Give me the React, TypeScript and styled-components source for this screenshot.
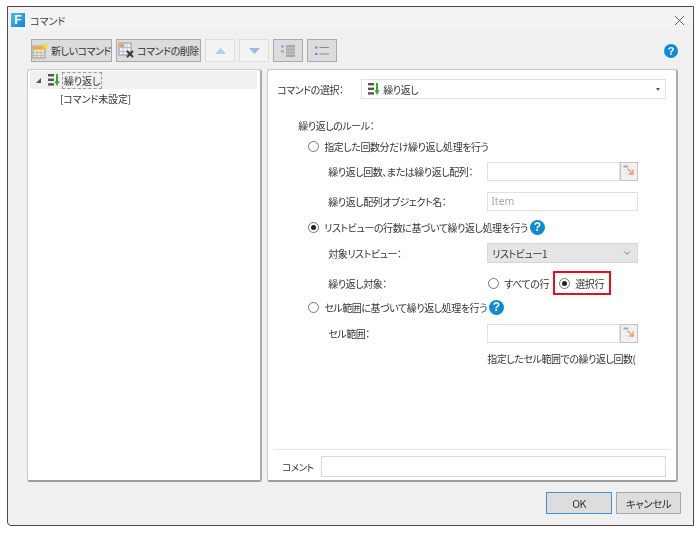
import styled, { createGlobalStyle } from 'styled-components';
import { ChevronDown, X } from 'lucide-react';

const GlobalStyle = createGlobalStyle`
  html, body {
    margin: 0;
    padding: 0;
    background: #fff;
  }
  body {
    font-family: "Noto Sans CJK JP", "Noto Sans", sans-serif;
    font-feature-settings: "palt";
    font-size: 10px;
    letter-spacing: -0.45px;
    color: #333;
  }
  * { box-sizing: border-box; }
`;

const RepeatIcon = () => (
  <svg width="14" height="14" viewBox="0 0 14 14">
    <rect x="1" y="1" width="6" height="2.4" fill="#555" />
    <rect x="1" y="5.6" width="6" height="2.4" fill="#555" />
    <rect x="1" y="10.2" width="6" height="2.4" fill="#555" />
    <path d="M10 1v8" stroke="#2fae2f" strokeWidth="2" />
    <path d="M7.4 8.200h5.200L10 13z" fill="#2fae2f" />
  </svg>
);

const NewIcon = () => (
  <svg width="17" height="17" viewBox="0 0 17 17">
    <rect x="1" y="4" width="12" height="12" fill="#f6e3bd" stroke="#9a9a9a" />
    <rect x="1.500" y="4.500" width="11" height="3" fill="#f0a83c" />
    <path d="M1 10.500h12M1 13.500h12M5 8v8M9 8v8" stroke="#a9b6c6" strokeWidth="0.8" />
    <path d="M13 0l1 2.500 2.500.5-2 1.500.5 2.500-2-1.300-2 1.300.5-2.500-2-1.500 2.500-.5z" fill="#f7d23c" />
  </svg>
);

const DeleteIcon = () => (
  <svg width="17" height="17" viewBox="0 0 17 17">
    <rect x="1" y="1" width="12" height="12" fill="#eef1f5" stroke="#8f9aa8" />
    <rect x="1.500" y="1.500" width="5" height="4" fill="#f2a33a" />
    <path d="M1 5.500h12M1 9.500h12M5 1v12M9 1v12" stroke="#a9b6c6" strokeWidth="0.8" />
    <path d="M9 9l6 6M15 9l-6 6" stroke="#333" strokeWidth="1.800" />
  </svg>
);

const RangeIcon = () => (
  <svg width="13" height="13" viewBox="0 0 13 13">
    <rect x="0.500" y="0.500" width="12" height="12" fill="#f5f1ec" />
    <rect x="0.500" y="0.500" width="5" height="2" fill="#8aa8d6" />
    <path d="M0.500 5h12M0.500 9h12M5 0.500v12M9 0.500v12" stroke="#e0e0e0" strokeWidth="0.6" />
    <path d="M4.500 3.500l5 5M10 4.500v4.500H6" stroke="#ee9a80" strokeWidth="1.300" fill="none" />
  </svg>
);

const TriangleIcon = ({ down }: { down?: boolean }) => (
  <svg width="11" height="6" viewBox="0 0 11 6">
    <path d={down ? 'M0 0h11L5.500 6z' : 'M5.500 0L11 6H0z'} fill={down ? '#9bbde8' : '#b4cfec'} />
  </svg>
);

const OutlineIcon = () => (
  <svg width="14" height="12" viewBox="0 0 14 12">
    <rect x="0" y="0.500" width="3" height="2" fill="#6cb0ea" />
    <rect x="0" y="5.500" width="3" height="2" fill="#6cb0ea" />
    <rect x="5" y="0" width="9" height="12" fill="#a9a9a9" />
    <path d="M5 3h9M5 6h9M5 9h9" stroke="#cfcfcf" strokeWidth="1" />
  </svg>
);

const BulletIcon = () => (
  <svg width="14" height="10" viewBox="0 0 14 10">
    <rect x="0" y="0.500" width="2.500" height="2" fill="#4d98e2" />
    <rect x="0" y="7" width="2.500" height="2" fill="#4d98e2" />
    <path d="M4.500 1.500H14M4.500 8H14" stroke="#8a8a8a" strokeWidth="1" />
  </svg>
);

const Dialog = styled.div`
  width: 687px;
  height: 520px;
  margin: 6px 0 0 7px;
  background: #f0f0f0;
  border: 1px solid #4a4a4a;
  border-radius: 0 0 0 4px;
  display: flex;
  flex-direction: column;
  filter: blur(0.35px);
`;

const TitleBar = styled.div`
  height: 23px;
  padding: 3px 5px 0 3px;
  display: flex;
  align-items: center;
  gap: 5px;
  background: #f3f3f3;
  color: #444;
`;

const AppBadge = styled.span`
  width: 14px;
  height: 14px;
  background: linear-gradient(135deg, #4fb8f0, #0b86d8);
  color: #fff;
  font: bold 12px/14px "Liberation Sans", sans-serif;
  letter-spacing: 0;
  text-align: center;
`;

const TitleText = styled.span`
  flex: 1;
  letter-spacing: 0;
`;

const CloseButton = styled.span`
  display: flex;
  color: #333;
`;

const Toolbar = styled.div`
  height: 39px;
  padding: 9px 15px 7px 23px;
  display: flex;
  gap: 4px;
  align-items: stretch;
`;

const ToolButton = styled.div<{ $active?: boolean; $width: number }>`
  width: ${p => p.$width}px;
  display: flex;
  align-items: center;
  justify-content: center;
  gap: 2px;
  background: ${p => (p.$active ? '#dcdcdc' : '#f3f3f3')};
  border: ${p => (p.$active ? '1.5px solid #a9a9a9' : '1px solid #dedede')};
  color: #333;
  white-space: nowrap;
`;

const Help = styled.span<{ $size: number }>`
  flex: none;
  width: ${p => p.$size}px;
  height: ${p => p.$size}px;
  border-radius: 50%;
  background: #0e8ad6;
  color: #fff;
  font: bold ${p => p.$size - 3}px/${p => p.$size}px "Liberation Sans", sans-serif;
  letter-spacing: 0;
  text-align: center;
`;

const ToolbarHelp = styled.div`
  margin-left: auto;
  display: flex;
  align-items: center;
`;

const Body = styled.div`
  height: 413px;
  padding: 0 15px 0 19px;
  display: flex;
  gap: 5px;
`;

const Panel = styled.div<{ $width: number }>`
  width: ${p => p.$width}px;
  background: #fff;
  border: 1px solid #c8c8c8;
  border-right: 2px solid #aaa;
  border-bottom: 2px solid #9c9c9c;
  border-radius: 3px;
  display: flex;
  flex-direction: column;
`;

const TreeRow = styled.div<{ $selected?: boolean; $indent: number }>`
  height: 18px;
  margin: ${p => (p.$selected ? '1px 3px 0 2px' : '0 3px 0 2px')};
  padding-left: ${p => p.$indent}px;
  display: flex;
  align-items: center;
  gap: 3px;
  background: ${p => (p.$selected ? '#f0f0f0' : 'transparent')};
  letter-spacing: -0.1px;
`;

const TreeArrow = styled.span`
  width: 0;
  height: 0;
  margin-right: 3px;
  border-style: solid;
  border-width: 0 0 5px 5px;
  border-color: transparent transparent #555 transparent;
`;

const TreeLabel = styled.span`
  border: 1px dashed #999;
  line-height: 15px;
  padding: 0 1px;
  margin-left: -2px;
`;

const TopSelectRow = styled.div`
  margin-top: 9px;
  padding: 0 10px 0 9px;
  display: flex;
  align-items: center;
  height: 20px;
`;

const TopSelectLabel = styled.span`
  width: 84px;
`;

const TopSelect = styled.div`
  flex: 1;
  height: 20px;
  padding: 0 5px;
  display: flex;
  align-items: center;
  gap: 2px;
  background: #fff;
  border: 1px solid #e0e0e0;
`;

const SelectCaret = styled.span`
  margin-left: auto;
  width: 0;
  height: 0;
  border-style: solid;
  border-width: 3px 2px 0 2px;
  border-color: #555 transparent transparent transparent;
`;

const Rules = styled.div`
  padding: 16px 0 0 30px;
  display: flex;
  flex-direction: column;
`;

const Row = styled.div<{ $top?: number; $indent?: number }>`
  height: 20px;
  margin-top: ${p => p.$top ?? 0}px;
  padding-left: ${p => p.$indent ?? 0}px;
  display: flex;
  align-items: center;
  white-space: nowrap;
`;

const Radio = styled.span<{ $checked?: boolean }>`
  flex: none;
  width: 11px;
  height: 11px;
  margin-right: 5px;
  border: 1px solid #777;
  border-radius: 50%;
  background: #fff;
  display: flex;
  align-items: center;
  justify-content: center;
  &::after {
    content: '';
    width: 5px;
    height: 5px;
    border-radius: 50%;
    background: ${p => (p.$checked ? '#222' : 'transparent')};
  }
`;

const RadioHelp = styled.span`
  margin-left: 2px;
  display: flex;
`;

const FieldLabel = styled.span`
  width: 159px;
`;

const InputGroup = styled.div`
  width: 151px;
  height: 19px;
  display: flex;
`;

const Input = styled.div`
  flex: 1;
  padding: 0 3px;
  display: flex;
  align-items: center;
  background: #fff;
  border: 1px solid #e0e0e0;
  color: #aaa;
  font-family: "Noto Sans", sans-serif;
  font-size: 10.5px;
  letter-spacing: 0;
`;

const RangeButton = styled.div`
  width: 18px;
  display: flex;
  align-items: center;
  justify-content: center;
  background: #f0f0f0;
  border: 1px solid #c4c4c4;
`;

const ListSelect = styled.div`
  width: 151px;
  height: 20px;
  padding: 0 5px 0 4px;
  display: flex;
  align-items: center;
  justify-content: space-between;
  background: #e5e5e5;
  border: 1px solid #d6d6d6;
  color: #333;
`;

const TargetOptions = styled.div`
  display: flex;
  align-items: center;
`;

const TargetOption = styled.span`
  display: flex;
  align-items: center;
  width: 66px;
  padding-left: 1px;
`;

const Highlight = styled.span`
  width: 58px;
  height: 24px;
  padding-left: 4px;
  display: flex;
  align-items: center;
  border: 2px solid #e60f22;
`;

const Note = styled.span`
  margin-left: 159px;
`;

const CommentArea = styled.div`
  margin: auto 6px 0 6px;
  padding: 6px 4px 3px 8px;
  display: flex;
  align-items: center;
  gap: 16px;
  border-top: 1px solid #e6e6e6;
`;

const CommentLabel = styled.span`
  font-size: 9.5px;
  width: 23px;
  white-space: nowrap;
`;

const CommentInput = styled.div`
  flex: 1;
  height: 21px;
  background: #fff;
  border: 1px solid #d8d8d8;
`;

const Footer = styled.div`
  flex: 1;
  padding: 10px 12px 0 0;
  display: flex;
  justify-content: flex-end;
  gap: 4px;
`;

const FooterButton = styled.div<{ $primary?: boolean; $width: number }>`
  width: ${p => p.$width}px;
  height: 22px;
  display: flex;
  align-items: center;
  justify-content: center;
  background: #dddddd;
  border: 1px solid ${p => (p.$primary ? '#3f94d8' : '#a8a8a8')};
  font-size: 10.5px;
`;

export default function App() {
  return (
    <>
      <GlobalStyle />
      <Dialog>
        <TitleBar>
          <AppBadge>F</AppBadge>
          <TitleText>コマンド</TitleText>
          <CloseButton><X size={17} strokeWidth={1.1} /></CloseButton>
        </TitleBar>
        <Toolbar>
          <ToolButton $active $width={81}><NewIcon />新しいコマンド</ToolButton>
          <ToolButton $active $width={85}><DeleteIcon />コマンドの削除</ToolButton>
          <ToolButton $width={30}><TriangleIcon /></ToolButton>
          <ToolButton $width={30}><TriangleIcon down /></ToolButton>
          <ToolButton $active $width={30}><OutlineIcon /></ToolButton>
          <ToolButton $active $width={30}><BulletIcon /></ToolButton>
          <ToolbarHelp><Help $size={14}>?</Help></ToolbarHelp>
        </Toolbar>
        <Body>
          <Panel $width={236}>
            <TreeRow $selected $indent={6}>
              <TreeArrow />
              <RepeatIcon />
              <TreeLabel>繰り返し</TreeLabel>
            </TreeRow>
            <TreeRow $indent={30}>[コマンド未設定]</TreeRow>
          </Panel>
          <Panel $width={412}>
            <TopSelectRow>
              <TopSelectLabel>コマンドの選択：</TopSelectLabel>
              <TopSelect>
                <RepeatIcon />
                繰り返し
                <SelectCaret />
              </TopSelect>
            </TopSelectRow>
            <Rules>
              <Row>繰り返しのルール：</Row>
              <Row $indent={10} $top={1}><Radio />指定した回数分だけ繰り返し処理を行う</Row>
              <Row $indent={30} $top={5}>
                <FieldLabel>繰り返し回数、または繰り返し配列：</FieldLabel>
                <InputGroup><Input /><RangeButton><RangeIcon /></RangeButton></InputGroup>
              </Row>
              <Row $indent={30} $top={10}>
                <FieldLabel>繰り返し配列オブジェクト名：</FieldLabel>
                <InputGroup><Input>Item</Input></InputGroup>
              </Row>
              <Row $indent={10} $top={6}>
                <Radio $checked />リストビューの行数に基づいて繰り返し処理を行う
                <RadioHelp><Help $size={15}>?</Help></RadioHelp>
              </Row>
              <Row $indent={30} $top={6}>
                <FieldLabel>対象リストビュー：</FieldLabel>
                <ListSelect>リストビュー1<ChevronDown size={10} color="#666" /></ListSelect>
              </Row>
              <Row $indent={30} $top={10}>
                <FieldLabel>繰り返し対象：</FieldLabel>
                <TargetOptions>
                  <TargetOption><Radio />すべての行</TargetOption>
                  <Highlight><Radio $checked />選択行</Highlight>
                </TargetOptions>
              </Row>
              <Row $indent={10} $top={4}>
                <Radio />セル範囲に基づいて繰り返し処理を行う
                <RadioHelp><Help $size={15}>?</Help></RadioHelp>
              </Row>
              <Row $indent={30} $top={6}>
                <FieldLabel>セル範囲：</FieldLabel>
                <InputGroup><Input /><RangeButton><RangeIcon /></RangeButton></InputGroup>
              </Row>
              <Row $indent={30} $top={5}>
                <Note>指定したセル範囲での繰り返し回数(</Note>
              </Row>
            </Rules>
            <CommentArea>
              <CommentLabel>コメント</CommentLabel>
              <CommentInput />
            </CommentArea>
          </Panel>
        </Body>
        <Footer>
          <FooterButton $primary $width={66}>OK</FooterButton>
          <FooterButton $width={65}>キャンセル</FooterButton>
        </Footer>
      </Dialog>
    </>
  );
}
